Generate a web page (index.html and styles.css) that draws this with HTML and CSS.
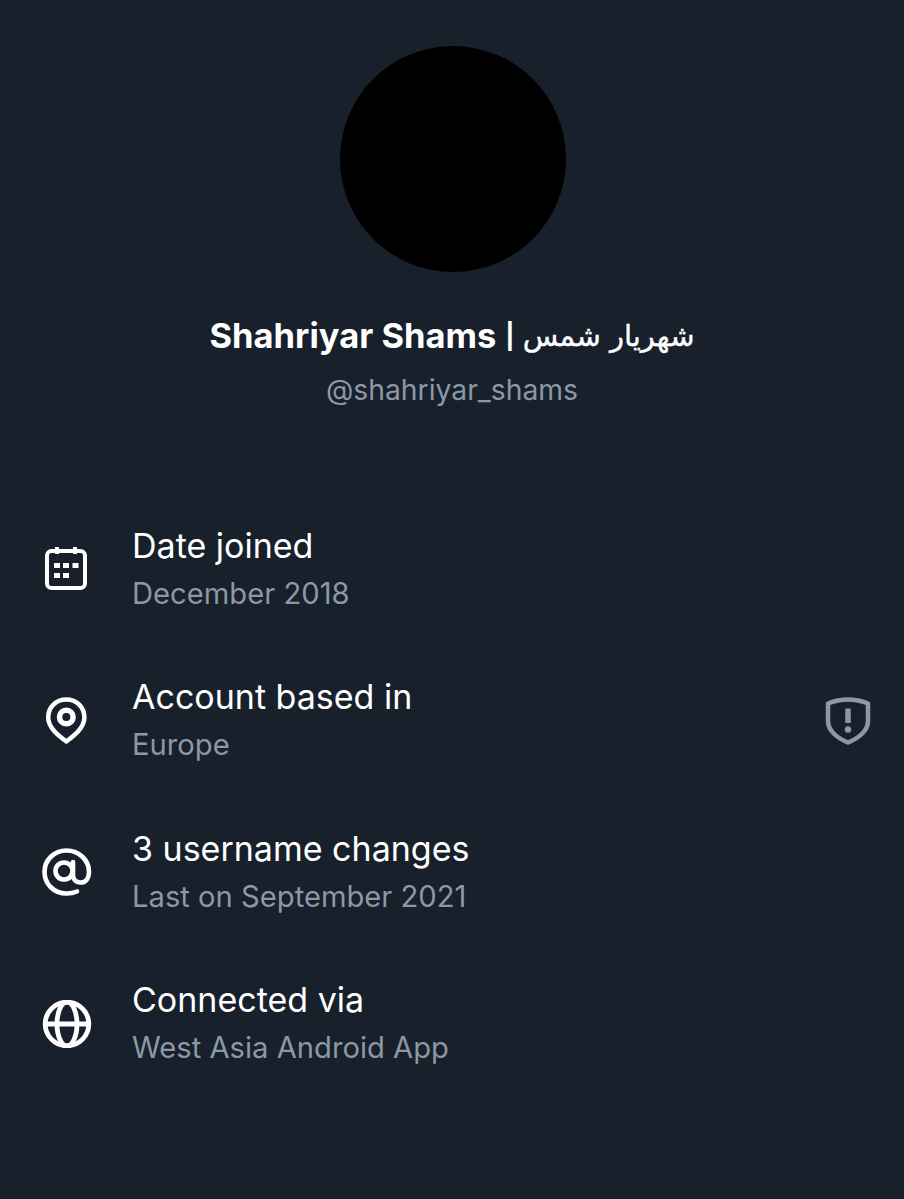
FILE: index.html
```html
<!DOCTYPE html>
<html>
<head>
	<meta charset="utf-8">
	<meta name="viewport" content="width=device-width, initial-scale=1.0">
	<link rel="stylesheet" href="styles.css">
</head>
<body>
	<div id="main">
		<!-- profile header -->
		<div class="profile">
			<div class="avatar"></div>
			<div class="name">Shahriyar Shams<span class="name-bar">|</span><span class="name-fa">شهریار شمس</span></div>
			<div class="handle">@shahriyar_shams</div>
		</div>

		<!-- account info rows -->
		<div class="rows">
			<div class="row">
				<svg class="icon" viewBox="0 0 50 48" fill="none" stroke="#fff" stroke-width="4">
					<rect x="5" y="6" width="38" height="37" rx="4.500"/>
					<path d="M15 2v7M33 2v7"/>
					<path d="M12 18h6v5h-6zM21 18h6v5h-6zM30.500 18h6v5h-6zM12 28h6v5h-6zM21 28h6v5h-6z" fill="#fff" stroke="none"/>
				</svg>
				<div class="text">
					<div class="title">Date joined</div>
					<div class="sub">December 2018</div>
				</div>
			</div>
			<div class="row">
				<svg class="icon" viewBox="0 0 50 48" fill="none" stroke="#fff" stroke-width="4.500">
					<path d="M24.300 44.500C17 39 6.200 31 6.200 20.500C6.200 10 14 2.500 24.300 2.500s18.100 7.500 18.100 18C42.400 31 31.600 39 24.300 44.500z" stroke-linejoin="round"/>
					<circle cx="24.300" cy="20" r="6.800" stroke-width="5.500"/>
				</svg>
				<div class="text">
					<div class="title">Account based in</div>
					<div class="sub">Europe</div>
				</div>
				<svg class="shield" viewBox="0 0 46 48" fill="none">
					<path d="M23 2.500C30 2.500 37 4 43 6.500V24C43 34 33 41.500 23 45.500C13 41.500 3 34 3 24V6.500C9 4 16 2.500 23 2.500z" stroke="#8b98a5" stroke-width="4.500" stroke-linejoin="round"/>
					<path d="M23 11.500V26" stroke="#8b98a5" stroke-width="5.500"/>
					<circle cx="23" cy="32.500" r="3.200" fill="#8b98a5"/>
				</svg>
			</div>
			<div class="row">
				<svg class="icon" viewBox="0 0 50 48" fill="none" stroke="#fff" stroke-width="4.600" stroke-linecap="round">
					<path d="M35 43.500C32 44.800 28.500 45.500 24.500 45.500C12 45.500 2.500 36 2.500 24S12 2.500 24.500 2.500S47 12 47 24C47 30 44 34.500 38.500 34.500C33.500 34.500 31 31 31 27V14"/>
					<circle cx="22" cy="23" r="8.500"/>
				</svg>
				<div class="text">
					<div class="title">3 username changes</div>
					<div class="sub">Last on September 2021</div>
				</div>
			</div>
			<div class="row">
				<svg class="icon" viewBox="0 0 50 48" fill="none" stroke="#fff" stroke-width="4.800">
					<circle cx="25" cy="24" r="21.800"/>
					<ellipse cx="25" cy="24" rx="10" ry="21.800"/>
					<path d="M3 24h44"/>
				</svg>
				<div class="text">
					<div class="title">Connected via</div>
					<div class="sub">West Asia Android App</div>
				</div>
			</div>
		</div>
	</div>
</body>
</html>
```

FILE: styles.css
```css
body {
	margin: 0;
	background-color: #17202b;
	font-family: Inter, Roboto, sans-serif;
}

#main {
	height: 1199px;
	overflow: hidden;
}

/* avatar, name and handle */
.profile {
	display: flex;
	flex-direction: column;
	align-items: center;
	padding-top: 46px;
}

.avatar {
	width: 226px;
	height: 226px;
	margin-left: 2px;
	border-radius: 50%;
	background-color: #000;
}

.name {
	display: flex;
	align-items: center;
	margin-top: 42px;
	color: #fff;
	font-size: 34.500px;
	line-height: 44px;
	font-weight: 700;
}

.name-bar {
	margin: 0 8px 0 9px;
	font-size: 25px;
}

.name-fa {
	font-family: "DejaVu Sans", sans-serif;
	font-size: 29px;
	font-weight: 400;
	-webkit-text-stroke: 0.4px #fff;
}

.handle {
	margin-top: 12px;
	color: #8b98a5;
	font-size: 28.300px;
	line-height: 40px;
}

/* info rows */
.rows {
	display: flex;
	flex-direction: column;
	gap: 47.600px;
	margin-top: 107px;
	padding: 0 33px 0 42px;
}

.row {
	display: flex;
	align-items: center;
	height: 104px;
}

.icon {
	flex: none;
	width: 50px;
	height: 48px;
}

.text {
	flex: 1;
	margin-left: 40px;
}

.title {
	color: #fff;
	font-size: 34px;
	line-height: 46px;
}

.sub {
	margin-top: 3px;
	color: #8b98a5;
	font-size: 29.200px;
	line-height: 44px;
}

.shield {
	flex: none;
	width: 46px;
	height: 48px;
}
```
